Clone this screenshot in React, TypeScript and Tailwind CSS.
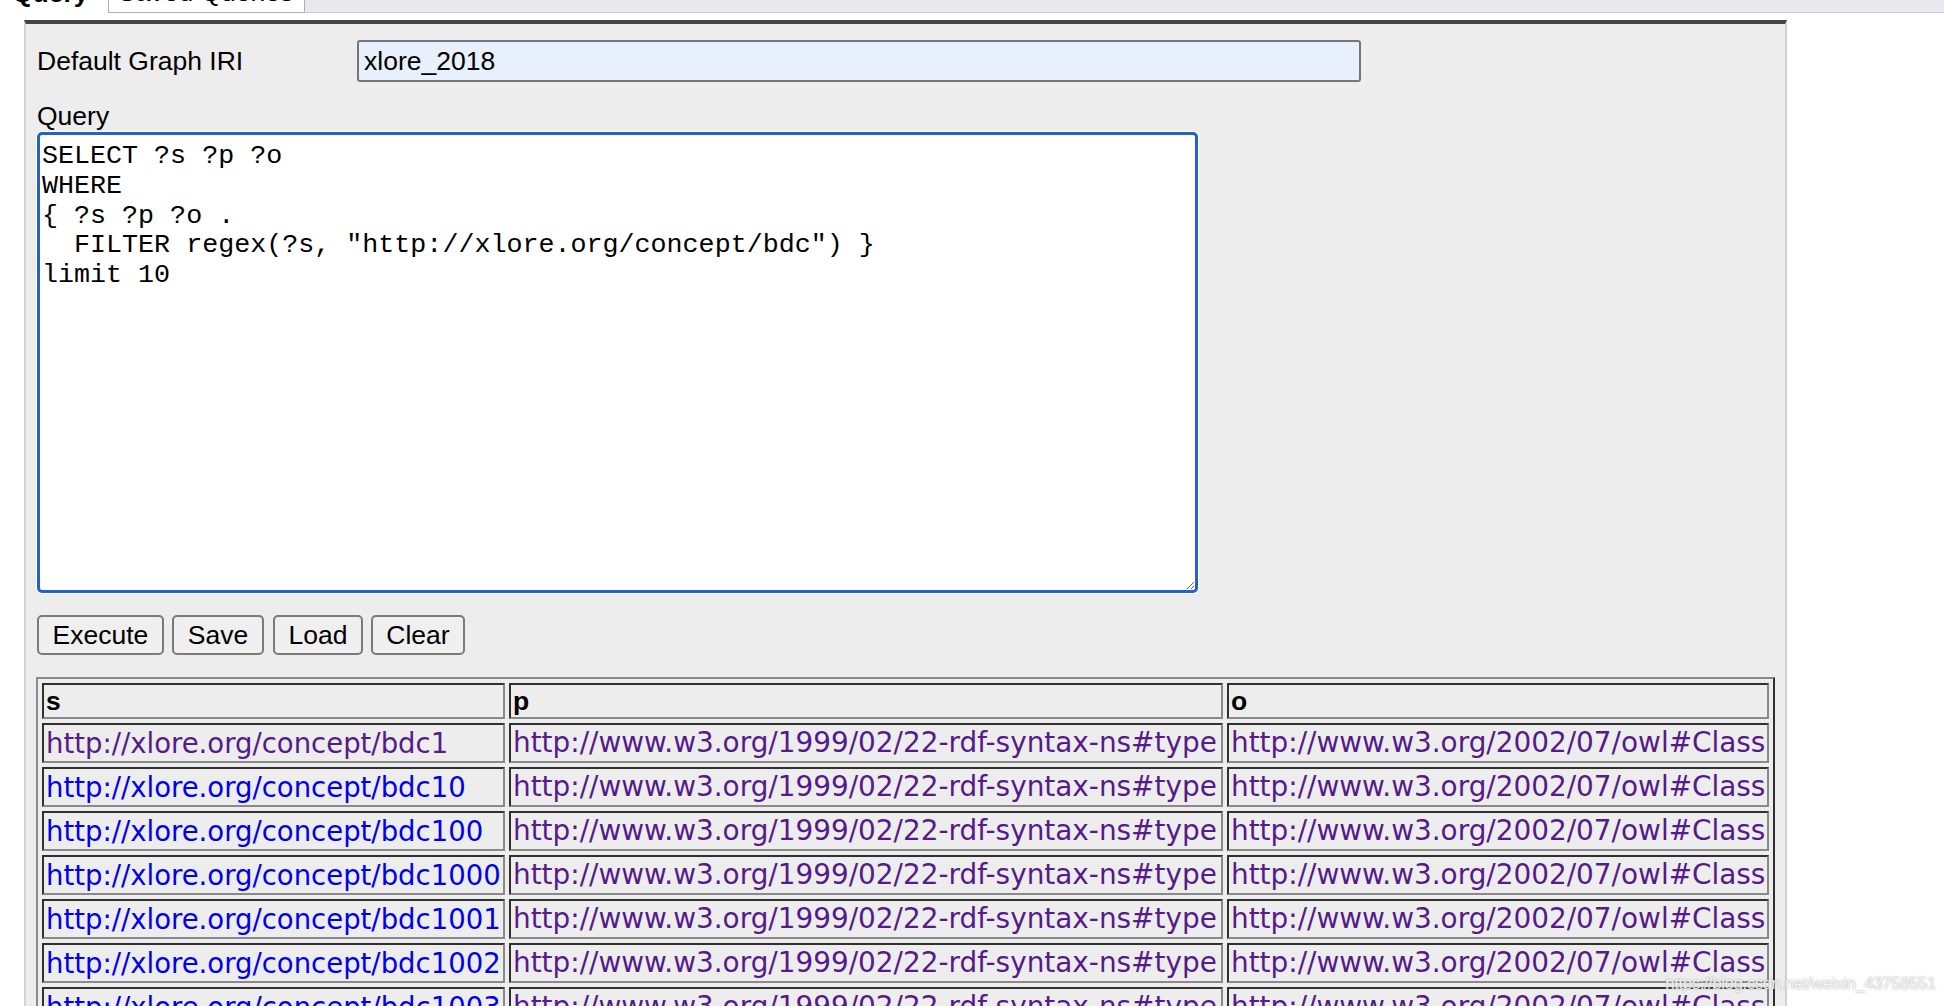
const rows = [
  { id: 'bdc1', seen: true },
  { id: 'bdc10', seen: false },
  { id: 'bdc100', seen: false },
  { id: 'bdc1000', seen: false },
  { id: 'bdc1001', seen: false },
  { id: 'bdc1002', seen: false },
  { id: 'bdc1003', seen: false },
  { id: 'bdc1004', seen: false },
  { id: 'bdc1005', seen: false },
  { id: 'bdc1006', seen: false },
];

const query = `SELECT ?s ?p ?o
WHERE
{ ?s ?p ?o .
  FILTER regex(?s, "http://xlore.org/concept/bdc") }
limit 10`;

const cell =
  "overflow-hidden whitespace-nowrap border-2 border-t-[#303030] border-l-[#303030] border-b-[#8a8a8a] border-r-[#8a8a8a] px-[2px] text-left";

function Button({ label, width }: { label: string; width: string }) {
  return (
    <button
      className={`${width} h-[40px] rounded-[5px] border-2 border-[#7a7a7a] bg-[#efefef] text-center text-[26.5px] leading-[30px] text-black`}
    >
      {label}
    </button>
  );
}

export default function App() {
  return (
    <div className="relative h-[1006px] w-[1944px] overflow-hidden bg-white font-['Liberation_Sans',Arial,sans-serif] text-black">
      {/* tabs, scrolled mostly out of view */}
      <div className="flex h-[13px] overflow-hidden">
        <div className="w-[108px] shrink-0 bg-white">
          <div className="-mt-[22px] pl-[12px] text-[26.5px] font-bold leading-[30px]">Query</div>
        </div>
        <div className="w-[197px] shrink-0 border-x border-b border-[#b0b0b0] bg-white">
          <div className="-mt-[23px] pl-[9px] text-[26.5px] leading-[30px]">Saved Queries</div>
        </div>
        <div className="flex-1 border-b border-[#cbcbcb] bg-[#e9e8ee]" />
      </div>

      <div className="ml-[24px] mt-[7px] h-[990px] w-[1763px] border-x-2 border-t-4 border-x-[#d2d2d2] border-t-[#444444] bg-[#ededed] px-[10px] pt-[16px]">
        <div className="flex items-center">
          <label className="w-[321px] pl-[1px] text-[26.5px] leading-[30px]">Default Graph IRI</label>
          <input
            defaultValue="xlore_2018"
            className="h-[42px] w-[1004px] rounded-[3px] border-2 border-[#767676] bg-[#e8f0fe] px-[5px] text-[26.5px] leading-[30px] text-black outline-none"
          />
        </div>

        <div className="mt-[19px] pl-[1px] text-[26.5px] leading-[30px]">Query</div>
        <textarea
          defaultValue={query}
          spellCheck={false}
          className="ml-[1px] mt-[1px] block h-[461px] w-[1161px] rounded-[5px] border-[3px] border-[#2361cc] bg-white px-[2px] pb-[4px] pt-[7px] font-['Liberation_Mono','Courier_New',monospace] text-[26.7px] leading-[29.8px] text-black shadow-[0_0_0_1px_#ffffff] outline-none"
        />

        <div className="ml-[1px] mt-[22px] flex">
          <Button label="Execute" width="w-[127px]" />
          <div className="ml-[8px]">
            <Button label="Save" width="w-[92px]" />
          </div>
          <div className="ml-[9px]">
            <Button label="Load" width="w-[90px]" />
          </div>
          <div className="ml-[8px]">
            <Button label="Clear" width="w-[94px]" />
          </div>
        </div>

        <table className="mt-[22px] w-[1739px] table-fixed border-separate border-spacing-1 border-2 border-t-[#8a8a8a] border-l-[#8a8a8a] border-b-[#2e2e2e] border-r-[#2e2e2e]">
          <colgroup>
            <col className="w-[463px]" />
            <col className="w-[714px]" />
            <col className="w-[542px]" />
          </colgroup>
          <thead>
            <tr>
              {['s', 'p', 'o'].map((h) => (
                <th key={h} className={`${cell} h-[36px] py-px text-[26.5px] font-bold leading-[30px]`}>
                  {h}
                </th>
              ))}
            </tr>
          </thead>
          <tbody className="font-['DejaVu_Sans',Verdana,sans-serif] leading-[32px]">
            {rows.map((r) => (
              <tr key={r.id}>
                <td className={`${cell} py-[2px] text-[27.5px]`}>
                  <a href="#" className={r.seen ? 'text-[#551a8b]' : 'text-[#0000ee]'}>
                    http://xlore.org/concept/{r.id}
                  </a>
                </td>
                <td className={`${cell} py-[2px] text-[27.9px]`}>
                  <a href="#" className="text-[#551a8b]">
                    http://www.w3.org/1999/02/22-rdf-syntax-ns#type
                  </a>
                </td>
                <td className={`${cell} py-[2px] text-[27.9px]`}>
                  <a href="#" className="text-[#551a8b]">
                    http://www.w3.org/2002/07/owl#Class
                  </a>
                </td>
              </tr>
            ))}
          </tbody>
        </table>
      </div>

      <div className="absolute bottom-[10px] right-[8px] text-[17px] tracking-[-0.5px] text-white/80 [text-shadow:0_0_2px_#9a9a9a]">
        https://blog.csdn.net/weixin_43758551
      </div>
    </div>
  );
}
